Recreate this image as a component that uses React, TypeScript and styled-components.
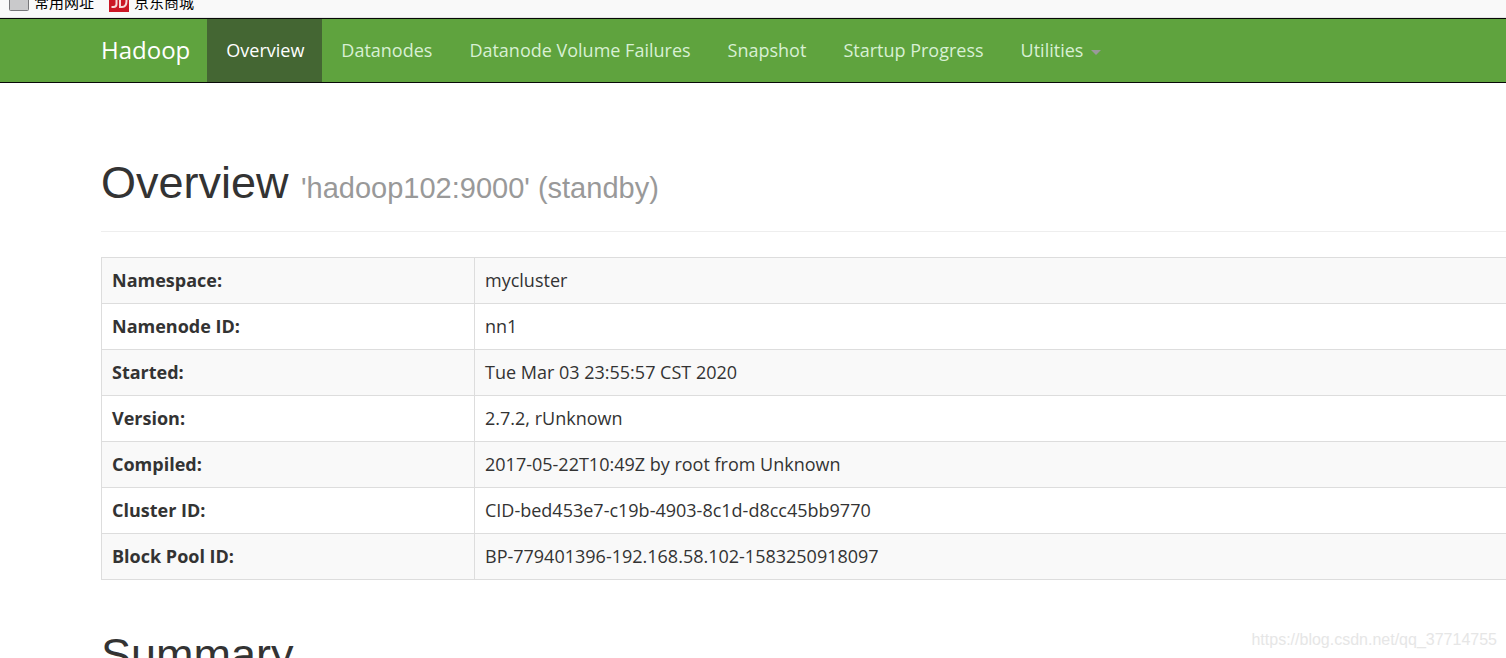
import React from "react";
import styled, { createGlobalStyle } from "styled-components";

const uiFont = `"Segoe UI", "Open Sans", "Noto Sans", sans-serif`;
const headingFont = `"Liberation Sans", Arial, sans-serif`;

const GlobalStyle = createGlobalStyle`
  *, *::before, *::after { box-sizing: border-box; }
  body {
    margin: 0;
    background: #fff;
    color: #333;
    font-family: ${uiFont};
    font-size: 18px;
    line-height: 25px;
  }
`;

const Page = styled.div`
  position: relative;
  height: 100vh;
  overflow: hidden;
`;

const BookmarkBar = styled.div`
  display: flex;
  align-items: flex-end;
  gap: 15px;
  height: 18px;
  padding: 0 9px 5px;
  overflow: hidden;
  background: #f9f9f9;
  border-bottom: 1px solid #e6e6e6;
`;

const Bookmark = styled.a`
  display: flex;
  align-items: flex-end;
  gap: 5px;
  color: #000;
  font-family: "Noto Sans CJK SC", sans-serif;
  font-size: 15px;
  line-height: 20px;
  text-decoration: none;

  svg { display: block; flex: none; }
`;

const Navbar = styled.nav`
  display: flex;
  height: 65px;
  padding-left: 82px;
  background: #5fa33e;
  border-top: 1px solid #080808;
  border-bottom: 1px solid #080808;
`;

const Brand = styled.a`
  padding: 18px 17px 18px 19px;
  color: #fff;
  font-size: 24px;
  line-height: 25px;
  text-decoration: none;
`;

const NavList = styled.ul`
  display: flex;
  margin: 0;
  padding: 0;
  list-style: none;
`;

const NavLink = styled.a<{ $active?: boolean }>`
  display: flex;
  align-items: center;
  gap: 8px;
  height: 63px;
  padding: 0 18px 0 19px;
  color: ${(p) => (p.$active ? "#fff" : "#d8f0d4")};
  background: ${(p) => (p.$active ? "#446633" : "transparent")};
  white-space: nowrap;
  text-decoration: none;
`;

const Caret = styled.span`
  margin-top: 4px;
  border-top: 5px solid #999;
  border-left: 5px solid transparent;
  border-right: 5px solid transparent;
`;

const Content = styled.main`
  padding: 75px 0 0 101px;
`;

const PageHeader = styled.header`
  margin-bottom: 25px;
  padding-bottom: 23px;
  border-bottom: 1px solid #eee;
`;

const Title = styled.h1`
  margin: 0;
  font-family: ${headingFont};
  font-size: 45px;
  font-weight: 400;
  line-height: 50px;
`;

const Subtitle = styled.small`
  color: #999;
  font-size: 29px;
  line-height: 1;
`;

const InfoTable = styled.table`
  width: 100%;
  margin-bottom: 50px;
  table-layout: fixed;
  border-collapse: collapse;
  border: 1px solid #ddd;
  border-right: 0;
`;

const Row = styled.tr`
  &:nth-child(odd) { background: #f9f9f9; }
`;

const Label = styled.th`
  width: 373px;
  height: 46px;
  padding: 10px;
  border: 1px solid #ddd;
  font-weight: 700;
  text-align: left;
`;

const Value = styled.td`
  padding: 10px;
  border: 1px solid #ddd;
  border-right: 0;
`;

const Watermark = styled.span`
  position: absolute;
  right: 9px;
  bottom: 8px;
  color: #e6e6e6;
  font-family: ${headingFont};
  font-size: 16px;
  line-height: 20px;
`;

const links = ["Overview", "Datanodes", "Datanode Volume Failures", "Snapshot", "Startup Progress", "Utilities"];

const details = [
  ["Namespace:", "mycluster"],
  ["Namenode ID:", "nn1"],
  ["Started:", "Tue Mar 03 23:55:57 CST 2020"],
  ["Version:", "2.7.2, rUnknown"],
  ["Compiled:", "2017-05-22T10:49Z by root from Unknown"],
  ["Cluster ID:", "CID-bed453e7-c19b-4903-8c1d-d8cc45bb9770"],
  ["Block Pool ID:", "BP-779401396-192.168.58.102-1583250918097"],
];

const FolderIcon = () => (
  <svg width="20" height="20" viewBox="0 0 20 20" aria-hidden="true">
    <rect x="0.5" y="0.5" width="19" height="18" rx="1" fill="#c9c9cb" stroke="#77777a" />
  </svg>
);

const ShopIcon = () => (
  <svg width="20" height="20" viewBox="0 0 20 20" aria-hidden="true">
    <rect width="20" height="20" fill="#cb1725" />
    <path d="M7.5 3v9q0 3-3 3H2.5M11 3v12h2q4.5 0 4.5-6T13 4z" fill="none" stroke="#f7dada" strokeWidth="2" />
  </svg>
);

export default function App() {
  return (
    <Page>
      <GlobalStyle />
      <BookmarkBar>
        <Bookmark href="#"><FolderIcon />常用网址</Bookmark>
        <Bookmark href="#"><ShopIcon />京东商城</Bookmark>
      </BookmarkBar>
      <Navbar>
        <Brand href="#">Hadoop</Brand>
        <NavList>
          {links.map((name) => (
            <li key={name}>
              <NavLink href="#" $active={name === "Overview"}>
                {name}
                {name === "Utilities" && <Caret />}
              </NavLink>
            </li>
          ))}
        </NavList>
      </Navbar>
      <Content>
        <PageHeader>
          <Title>Overview <Subtitle>'hadoop102:9000' (standby)</Subtitle></Title>
        </PageHeader>
        <InfoTable>
          <tbody>
            {details.map(([label, value]) => (
              <Row key={label}>
                <Label scope="row">{label}</Label>
                <Value>{value}</Value>
              </Row>
            ))}
          </tbody>
        </InfoTable>
        <Title as="h2">Summary</Title>
      </Content>
      <Watermark>https://blog.csdn.net/qq_37714755</Watermark>
    </Page>
  );
}
